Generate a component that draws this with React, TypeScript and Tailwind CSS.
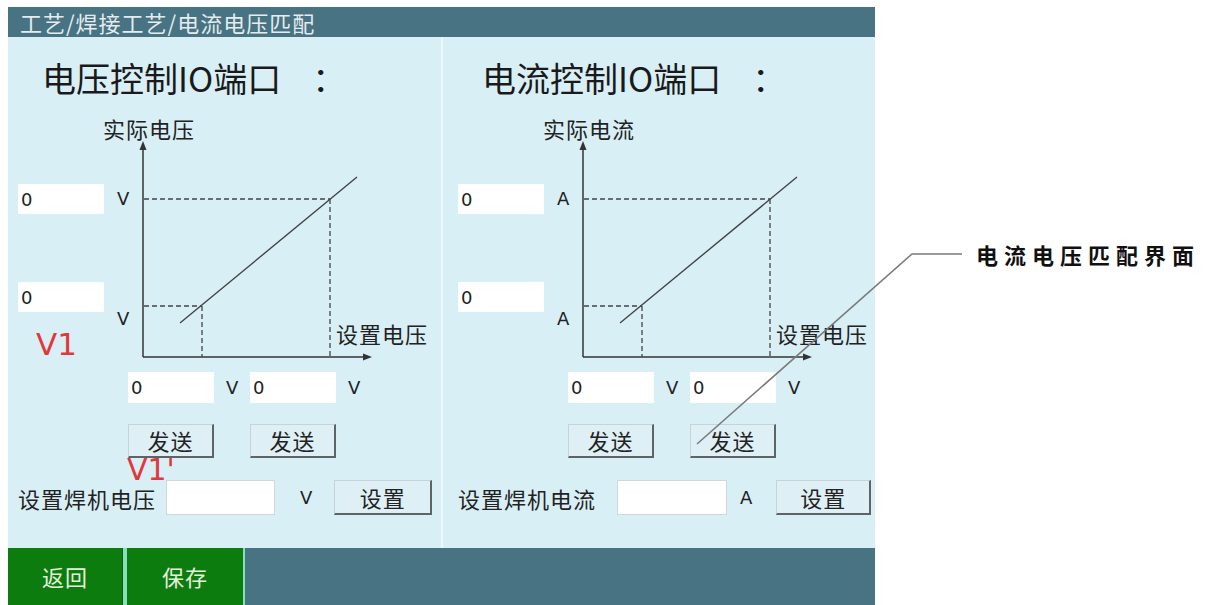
import React from "react";

const CJK = "font-['Noto_Sans_CJK_SC',_'Noto_Sans',_sans-serif]";
const NUM = "font-['DejaVu_Sans',_'Noto_Sans_CJK_SC',_sans-serif]";

function Field({ value, className = "" }: { value?: string; className?: string }) {
  return (
    <div className={`bg-white flex items-center pl-[3px] text-[18px] text-[#222] ${NUM} ${className}`}>{value}</div>
  );
}

function Btn({ label, className = "" }: { label: string; className?: string }) {
  return (
    <div
      className={`flex items-center justify-center bg-[#def0f6] border-t border-l border-t-[#c9d3d6] border-l-[#c9d3d6] border-r-2 border-b-2 border-r-[#5e6466] border-b-[#5e6466] text-[22px] tracking-[1px] text-[#222] ${CJK} ${className}`}
    >
      {label}
    </div>
  );
}

function Chart({ yLabel, unit, marks }: { yLabel: string; unit: string; marks: boolean }) {
  return (
    <div className="relative h-[312px] w-full">
      <svg className="absolute left-0 top-0" width="433" height="312" viewBox="0 0 433 312">
        <line x1="135" y1="50" x2="135" y2="259" stroke="#333" strokeWidth="1.5" />
        <polygon points="135,43 131.5,52 138.5,52" fill="#333" />
        <line x1="135" y1="259" x2="356" y2="259" stroke="#333" strokeWidth="1.5" />
        <polygon points="364,259 355,255.5 355,262.5" fill="#333" />
        <line x1="172" y1="225" x2="349" y2="79" stroke="#444" strokeWidth="1.4" />
        <g stroke="#444" strokeWidth="1.3" strokeDasharray="5 3">
          <line x1="136" y1="101" x2="322" y2="101" />
          <line x1="322" y1="101" x2="322" y2="259" />
          <line x1="136" y1="208" x2="194" y2="208" />
          <line x1="194" y1="208" x2="194" y2="259" />
        </g>
      </svg>
      <div className={`absolute left-[95px] top-[17px] text-[22px] leading-[26px] tracking-[1px] text-[#222] ${CJK}`}>{yLabel}</div>
      <div className={`absolute left-[328px] top-[222px] text-[22px] leading-[26px] tracking-[1px] text-[#222] ${CJK}`}>设置电压</div>
      <Field value="0" className="absolute left-[10px] top-[86px] h-[30px] w-[86px]" />
      <div className={`absolute left-[109px] top-[91px] text-[18px] leading-[20px] text-[#222] ${NUM}`}>{unit}</div>
      <Field value="0" className="absolute left-[10px] top-[184px] h-[30px] w-[86px]" />
      <div className={`absolute left-[109px] top-[211px] text-[18px] leading-[20px] text-[#222] ${NUM}`}>{unit}</div>
      <Field value="0" className="absolute left-[120px] top-[274px] h-[31px] w-[86px]" />
      <div className={`absolute left-[218px] top-[280px] text-[18px] leading-[20px] text-[#222] ${NUM}`}>V</div>
      <Field value="0" className="absolute left-[242px] top-[274px] h-[31px] w-[86px]" />
      <div className={`absolute left-[340px] top-[280px] text-[18px] leading-[20px] text-[#222] ${NUM}`}>V</div>
      {marks && (
        <div className={`absolute left-[28px] top-[231px] text-[31px] leading-[31px] text-[#e0383c] ${NUM}`}>V1</div>
      )}
    </div>
  );
}

function Panel({
  title,
  yLabel,
  unit,
  setLabel,
  marks,
  inputGap,
  inputW,
  vGap,
  btnGap,
  btnW,
}: {
  title: string;
  yLabel: string;
  unit: string;
  setLabel: string;
  marks: boolean;
  inputGap: string;
  inputW: string;
  vGap: string;
  btnGap: string;
  btnW: string;
}) {
  return (
    <div className="relative flex w-[433px] flex-col">
      <div className={`pl-[34px] pt-[21px] text-[34px] leading-[40px] text-[#1a1a1a] ${CJK}`}>
        {title}
        <span className="ml-[31px]">：</span>
      </div>
      <Chart yLabel={yLabel} unit={unit} marks={marks} />
      <div className="mt-[14px] flex gap-[36px] pl-[120px]">
        <Btn label="发送" className="h-[34px] w-[86px]" />
        <Btn label="发送" className="h-[34px] w-[86px]" />
      </div>
      {marks && (
        <div className={`absolute left-[119px] top-[418px] text-[30px] leading-[30px] text-[#e0383c] ${NUM}`}>V1'</div>
      )}
      <div className="mt-[22px] flex h-[35px] items-center pl-[10px]">
        <div className={`text-[22px] leading-[26px] tracking-[1px] text-[#222] ${CJK}`}>{setLabel}</div>
        <div className={`h-[35px] bg-white border border-[#cfd8db] ${inputGap} ${inputW}`} />
        <div className={`text-[18px] text-[#222] ${NUM} ${vGap}`}>{unit}</div>
        <Btn label="设置" className={`h-[35px] ${btnGap} ${btnW}`} />
      </div>
    </div>
  );
}

export default function App() {
  return (
    <div className="relative h-[605px] w-[1213px] overflow-hidden bg-white">
      <div className="ml-[8px] flex h-full w-[867px] flex-col pt-[7px]">
        <div className={`h-[30px] bg-[#477382] pl-[12px] text-[22px] leading-[30px] tracking-[1px] text-[#e4ecef] ${CJK}`}>
          工艺/焊接工艺/电流电压匹配
        </div>
        <div className="flex h-[511px] bg-[#d9eff6]">
          <Panel
            title="电压控制IO端口"
            yLabel="实际电压"
            unit="V"
            setLabel="设置焊机电压"
            marks
            inputGap="ml-[10px]"
            inputW="w-[109px]"
            vGap="ml-[25px]"
            btnGap="ml-[22px]"
            btnW="w-[98px]"
          />
          <div className="w-[2px] bg-[#eef8fb]" />
          <div className="flex-1 overflow-hidden">
            <div className="ml-[5px]">
              <Panel
                title="电流控制IO端口"
                yLabel="实际电流"
                unit="A"
                setLabel="设置焊机电流"
                marks={false}
                inputGap="ml-[21px]"
                inputW="w-[110px]"
                vGap="ml-[13px]"
                btnGap="ml-[24px]"
                btnW="w-[95px]"
              />
            </div>
          </div>
        </div>
        <div className="flex flex-1 bg-[#477382]">
          <div className={`flex w-[114px] items-center justify-center bg-[#0d7c0f] text-[22px] tracking-[1px] text-[#e2f2da] ${CJK}`}>
            返回
          </div>
          <div className="w-[1px] bg-[#0a5e0b]" />
          <div className="w-[4px] bg-[#86e0bd]" />
          <div className={`flex w-[118px] items-center justify-center border-r-2 border-r-[#86e0bd] bg-[#0d7c0f] text-[22px] tracking-[1px] text-[#e2f2da] ${CJK}`}>
            保存
          </div>
        </div>
      </div>
      <svg className="pointer-events-none absolute left-0 top-0" width="1213" height="605">
        <polyline points="697,444 912,254 962,254" fill="none" stroke="#7a7a7a" strokeWidth="1.6" />
      </svg>
      <div className={`absolute left-[976px] top-[241px] text-[22px] font-bold leading-[26px] tracking-[6px] text-[#111] ${CJK}`}>
        电流电压匹配界面
      </div>
    </div>
  );
}
